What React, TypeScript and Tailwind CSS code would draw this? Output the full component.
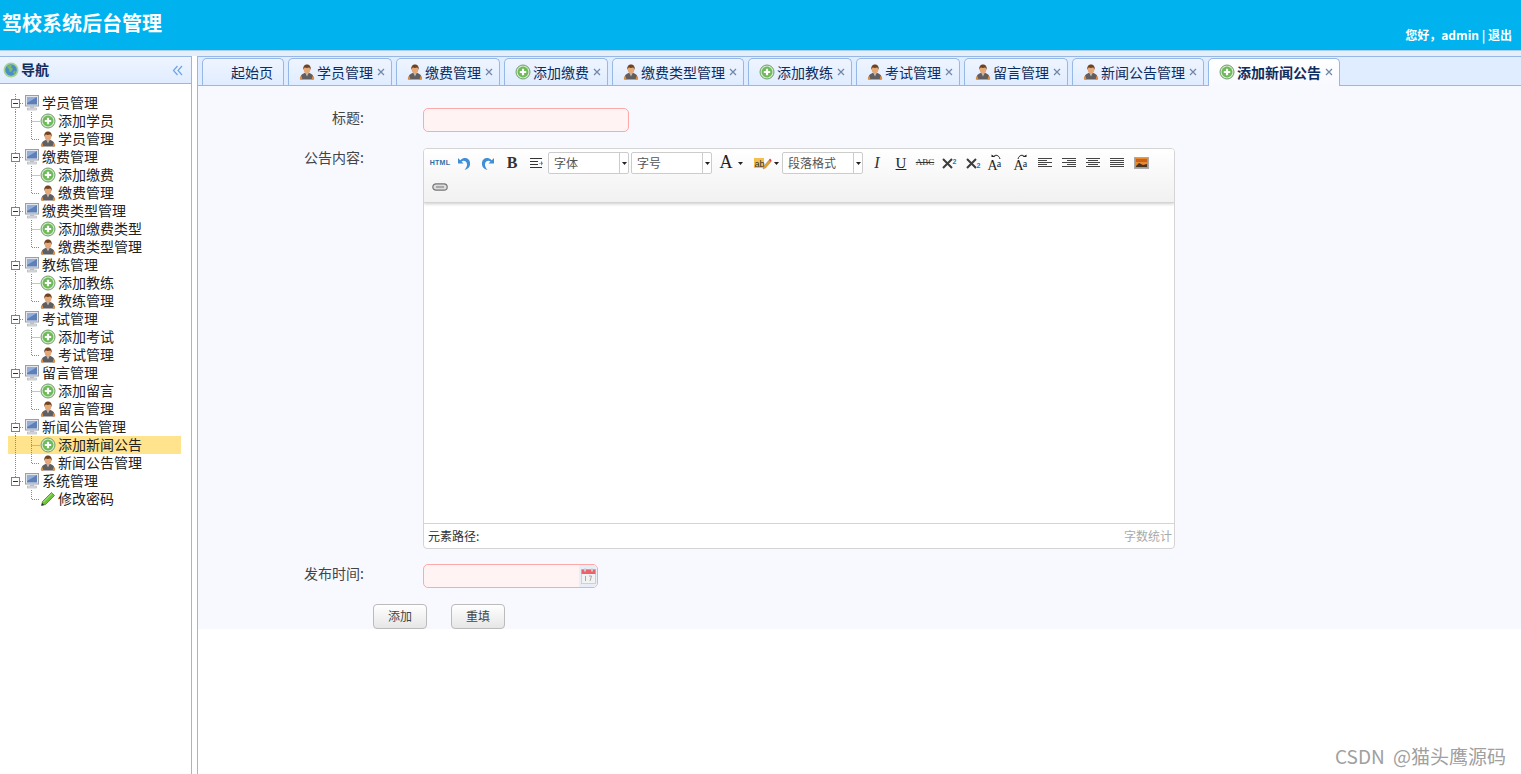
import type { ReactNode } from "react"

function PlusIcon() {
  return (
    <svg width="16" height="16" viewBox="0 0 16 16" className="shrink-0">
      <circle cx="8" cy="8" r="7" fill="#d5e8cf" stroke="#6f9f68" strokeWidth="1" />
      <circle cx="8" cy="8" r="5.400" fill="#6dbb58" />
      <path d="M8 4.800v6.400M4.800 8h6.400" stroke="#fff" strokeWidth="2.200" />
    </svg>
  )
}

function PersonIcon() {
  return (
    <svg width="16" height="16" viewBox="0 0 16 16" className="shrink-0">
      <path d="M1.500 15.500c-.5-3.500 1-5.500 4-6.500h5c3 1 4.500 3 4 6.500z" fill="#5f5f62" />
      <path d="M1 15.500c-.5-1.500 0-3 1.500-3.500l1 3.500zM15 15.500c.5-1.500 0-3-1.500-3.500l-1 3.500z" fill="#e2893a" />
      <path d="M6.300 9L8 12.500 9.700 9z" fill="#b9b9b9" />
      <ellipse cx="8" cy="5.500" rx="3.300" ry="4" fill="#e5a878" />
      <path d="M4.300 6C3.700 2.300 5.800.5 8 .5s4.300 1.800 3.700 5.500c-.4-1.400-.9-2.200-1.700-2.500-1.300.5-3 .5-4 0-.8.300-1.300 1.100-1.700 2.500z" fill="#6f4220" />
    </svg>
  )
}

function ComputerIcon() {
  return (
    <svg width="16" height="16" viewBox="0 0 16 16" className="shrink-0">
      <rect x="1.500" y="0.500" width="13" height="10.500" fill="#e3e6ea" stroke="#9a9fa6" />
      <rect x="3" y="2" width="10" height="7.500" fill="#5f7fb8" />
      <path d="M3 2h10L3 8z" fill="#93aedb" />
      <rect x="6" y="11" width="4" height="2" fill="#c3c7cc" />
      <rect x="3.500" y="13" width="9" height="2" fill="#dfe2e5" stroke="#a8adb3" strokeWidth=".6" />
    </svg>
  )
}

function PencilIcon() {
  return (
    <svg width="16" height="16" viewBox="0 0 16 16" className="shrink-0">
      <path d="M1.500 14.500l1-4L11.500 1.500l3 3-9 9z" fill="#6cc23a" stroke="#3c8a20" strokeWidth=".8" />
      <path d="M3.500 11L12 2.500" stroke="#b6e88f" strokeWidth="1" />
      <path d="M1.500 14.500l.6-2.600 2 2z" fill="#2e2e2e" />
    </svg>
  )
}

function GlobeIcon() {
  return (
    <svg width="16" height="16" viewBox="0 0 16 16" className="shrink-0">
      <circle cx="8" cy="8" r="7.500" fill="#a3d48f" />
      <circle cx="8" cy="8" r="5.800" fill="#4a8ec9" />
      <path d="M4 5c1.500-2 4-2.500 5-2l-1 2.500 2 1-1.500 3-2 .5-.5-3zM10 10l2-1.500.8 1.500-2 2.500z" fill="#7dbb68" />
    </svg>
  )
}

function CalendarIcon() {
  return (
    <svg width="15" height="16" viewBox="0 0 15 16" className="shrink-0">
      <rect x="0.500" y="1.500" width="14" height="14" fill="#f2f2f2" stroke="#d0d0d0" />
      <rect x="0.500" y="1.500" width="14" height="4.500" fill="#e8636b" />
      <rect x="3" y="0.500" width="2" height="3" fill="#ccc" />
      <rect x="10" y="0.500" width="2" height="3" fill="#ccc" />
      <path d="M4.500 8v5M8 8h2.500l-1.500 5" stroke="#a8a8a8" strokeWidth="1" fill="none" />
    </svg>
  )
}

// dotted tree connectors, one 16x18 cell each
function Cell({ kind }: { kind: "line" | "join" | "end" | "none" }) {
  return (
    <svg width="16" height="18" viewBox="0 0 16 18" className="shrink-0">
      {kind !== "none" && kind !== "end" && (
        <path d="M7.500 0v18" stroke="#8a8a8a" strokeDasharray="1 1" />
      )}
      {kind === "end" && <path d="M7.500 0v9.500H16" stroke="#8a8a8a" strokeDasharray="1 1" fill="none" />}
      {kind === "join" && <path d="M7.500 9.500H16" stroke="#8a8a8a" strokeDasharray="1 1" />}
    </svg>
  )
}

function Expander({ last, first }: { last?: boolean; first?: boolean }) {
  return (
    <svg width="16" height="18" viewBox="0 0 16 18" className="shrink-0">
      <path d={first ? "M7.500 5V0" : "M7.500 0v5"} stroke="#8a8a8a" strokeDasharray="1 1" />
      {!last && <path d="M7.500 13v5" stroke="#8a8a8a" strokeDasharray="1 1" />}
      <path d="M12 9.500h4" stroke="#8a8a8a" strokeDasharray="1 1" />
      <rect x="3.500" y="5.500" width="8" height="8" fill="#fff" stroke="#808080" />
      <path d="M5 9.500h5" stroke="#333" />
    </svg>
  )
}

const groups = [
  { name: "学员管理", add: "添加学员", manage: "学员管理" },
  { name: "缴费管理", add: "添加缴费", manage: "缴费管理" },
  { name: "缴费类型管理", add: "添加缴费类型", manage: "缴费类型管理" },
  { name: "教练管理", add: "添加教练", manage: "教练管理" },
  { name: "考试管理", add: "添加考试", manage: "考试管理" },
  { name: "留言管理", add: "添加留言", manage: "留言管理" },
  { name: "新闻公告管理", add: "添加新闻公告", manage: "新闻公告管理" },
]

function Row({ children, selected }: { children: ReactNode; selected?: boolean }) {
  return (
    <div className={`flex h-[18px] items-center text-[14px] leading-[16px] text-[#222] ${selected ? "bg-[#ffe48d]" : ""}`}>
      {children}
    </div>
  )
}

function Tree() {
  return (
    <div className="ml-2 mr-[10px] mt-[10px]">
      {groups.map((g, i) => (
        <div key={g.name}>
          <Row>
            <Expander first={i === 0} />
            <ComputerIcon />
            <span className="mb-[2px] ml-[2px]">{g.name}</span>
          </Row>
          <Row selected={g.add === "添加新闻公告"}>
            <Cell kind="line" />
            <Cell kind="join" />
            <PlusIcon />
            <span className="mb-[2px] ml-[2px]">{g.add}</span>
          </Row>
          <Row>
            <Cell kind="line" />
            <Cell kind="end" />
            <PersonIcon />
            <span className="mb-[2px] ml-[2px]">{g.manage}</span>
          </Row>
        </div>
      ))}
      <Row>
        <Expander last />
        <ComputerIcon />
        <span className="mb-[2px] ml-[2px]">系统管理</span>
      </Row>
      <Row>
        <Cell kind="none" />
        <Cell kind="end" />
        <PencilIcon />
        <span className="mb-[2px] ml-[2px]">修改密码</span>
      </Row>
    </div>
  )
}

const tabs: { label: string; icon: "person" | "plus" }[] = [
  { label: "学员管理", icon: "person" },
  { label: "缴费管理", icon: "person" },
  { label: "添加缴费", icon: "plus" },
  { label: "缴费类型管理", icon: "person" },
  { label: "添加教练", icon: "plus" },
  { label: "考试管理", icon: "person" },
  { label: "留言管理", icon: "person" },
  { label: "新闻公告管理", icon: "person" },
]

function Tab({ label, icon, active }: { label: string; icon: "person" | "plus"; active?: boolean }) {
  return (
    <div
      className={`flex items-center rounded-t-[5px] border border-b-0 border-[#95b8e7] pl-[10px] pr-[2px] text-[14px] leading-[26px] text-[#0e2d5f] ${
        active
          ? "relative z-10 h-[28px] bg-gradient-to-b from-white to-[#f8f9ff] pb-[2px] font-bold"
          : "h-[27px] bg-gradient-to-b from-[#eff5ff] to-[#e0ecff] pb-[1px]"
      }`}
    >
      {icon === "person" ? <PersonIcon /> : <PlusIcon />}
      <span className="ml-[2px] w-max">{label}</span>
      <span className="flex h-[16px] w-[16px] items-center justify-center">
        <svg width="8" height="8" viewBox="0 0 8 8">
          <path d="M1 1l6 6M7 1L1 7" stroke="#6f86a8" strokeWidth="1.200" />
        </svg>
      </span>
    </div>
  )
}

function Cellbtn({ children, className = "w-[24px]" }: { children: ReactNode; className?: string }) {
  return <div className={`flex h-[24px] shrink-0 items-center justify-center ${className}`}>{children}</div>
}

function Combo({ label, width }: { label: string; width: string }) {
  return (
    <div className={`flex h-[22px] shrink-0 rounded-[2px] border border-[#ccc] bg-white ${width}`}>
      <span className="flex-1 pl-[5px] text-[12px] leading-[20px] text-[#555]">{label}</span>
      <span className="flex w-[9px] items-center justify-center border-l border-[#ccc]">
        <Caret />
      </span>
    </div>
  )
}

function Caret() {
  return (
    <svg width="5" height="3" viewBox="0 0 5 3" className="shrink-0">
      <path d="M0 0h5L2.500 3z" fill="#222" />
    </svg>
  )
}

function Lines({ rows }: { rows: [number, number][] }) {
  return (
    <svg width="16" height="12" viewBox="0 0 16 12">
      {rows.map(([x, w], i) => (
        <path key={i} d={`M${x} ${i * 2 + 1.500}h${w}`} stroke="#444" strokeWidth="1" />
      ))}
    </svg>
  )
}

function Letter({ children, className }: { children: ReactNode; className: string }) {
  return <span className={`font-['Liberation_Serif',serif] ${className}`}>{children}</span>
}

function FontSizeIcon({ up }: { up?: boolean }) {
  return (
    <span className="relative flex h-[16px] w-[15px] items-end font-['Liberation_Serif',serif] leading-[11px] text-[#222]">
      <span className="text-[14px]">A</span>
      <span className="-ml-[1px] -translate-y-[2px] text-[10px]">a</span>
      <svg width="10" height="6" viewBox="0 0 10 6" className="absolute left-[3px] -top-[1px]">
        <path d={up ? "M1 5C2 1 6 0 7.500 3" : "M9 5C8 1 4 0 2.500 3"} stroke="#222" fill="none" />
        <path d={up ? "M5.500 3h4V.5z" : "M4.500 3h-4V.5z"} fill="#222" />
      </svg>
    </span>
  )
}

function CrossIcon({ sup }: { sup?: boolean }) {
  return (
    <span className={`flex ${sup ? "items-start" : "items-end"}`}>
      <svg width="11" height="11" viewBox="0 0 11 11" className="shrink-0">
        <path d="M1 1l9 9M10 1l-9 9" stroke="#3c3c3c" strokeWidth="2" />
      </svg>
      <span className="font-['Liberation_Sans',sans-serif] text-[7px] font-bold leading-[7px] text-[#2f6fd0]">2</span>
    </span>
  )
}

function Toolbar() {
  return (
    <div className="h-[54px] shrink-0 border-b border-[#d4d4d4] bg-gradient-to-b from-white to-[#f1f1f1] pl-[4px] pt-[2px] shadow-[0_1px_3px_#ccc]">
      <div className="flex h-[24px] items-center">
        <Cellbtn>
          <span className="font-['Liberation_Sans',sans-serif] text-[7px] font-bold tracking-[0.3px] text-[#2a6fa8]">HTML</span>
        </Cellbtn>
        <Cellbtn>
          <svg width="14" height="15" viewBox="0 0 14 15">
            <path d="M1 2v5.500h5.500L4.500 5.500C6.500 4 9.500 5 10 8c.3 2.200-.8 4-2.500 6 3.700-.8 6-3.500 5.500-7.500C12.300 2 7.500.500 3.200 4.200z" fill="#3f8fd6" />
          </svg>
        </Cellbtn>
        <Cellbtn>
          <svg width="14" height="15" viewBox="0 0 14 15">
            <path d="M13 2v5.500H7.500L9.500 5.500C7.500 4 4.500 5 4 8c-.3 2.200.8 4 2.500 6C2.800 13.200.5 10.500 1 6.500 1.700 2 6.500.500 10.800 4.200z" fill="#3f8fd6" />
          </svg>
        </Cellbtn>
        <Cellbtn>
          <Letter className="text-[16px] font-bold text-[#333]">B</Letter>
        </Cellbtn>
        <Cellbtn>
          <svg width="14" height="12" viewBox="0 0 14 12">
            <path d="M1 1.500h12M1 4.500h8M1 7.500h8M1 10.500h12" stroke="#333" />
            <path d="M10 6h2V4l2 2.200-2 2.200V6.500h-2z" fill="#3f7fd6" />
          </svg>
        </Cellbtn>
        <Combo label="字体" width="w-[81px]" />
        <div className="w-[2px] shrink-0" />
        <Combo label="字号" width="w-[81px]" />
        <Cellbtn className="w-[38px] gap-[5px]">
          <Letter className="-translate-y-[1px] text-[18px] text-[#222]">A</Letter>
          <Caret />
        </Cellbtn>
        <Cellbtn className="w-[32px] gap-[2px] pl-[1px]">
          <svg width="18" height="15" viewBox="0 0 18 15">
            <rect x="0" y="2" width="10" height="10" fill="#f5bf4f" />
            <text x="0.500" y="10.500" fontSize="9" fill="#333" fontFamily="Liberation Sans">ab</text>
            <path d="M9 13l1-3 5.500-6.500 1.800 1.800-5.500 6.500z" fill="#e8a02e" stroke="#a06a20" strokeWidth=".4" />
            <path d="M15 4l1-1.500 1.700 1.700-1 1.500z" fill="#d44" />
          </svg>
          <Caret />
        </Cellbtn>
        <Combo label="段落格式" width="w-[81px]" />
        <div className="w-[2px] shrink-0" />
        <Cellbtn>
          <Letter className="text-[16px] italic text-[#333]">I</Letter>
        </Cellbtn>
        <Cellbtn>
          <Letter className="text-[15px] text-[#222] underline">U</Letter>
        </Cellbtn>
        <Cellbtn>
          <Letter className="text-[9px] text-[#333] line-through">ABC</Letter>
        </Cellbtn>
        <Cellbtn>
          <CrossIcon sup />
        </Cellbtn>
        <Cellbtn>
          <CrossIcon />
        </Cellbtn>
        <Cellbtn className="w-[20px]">
          <FontSizeIcon />
        </Cellbtn>
        <div className="w-[4px] shrink-0" />
        <Cellbtn>
          <FontSizeIcon up />
        </Cellbtn>
        <Cellbtn>
          <Lines rows={[[1, 14], [1, 9], [1, 14], [1, 9], [1, 14]]} />
        </Cellbtn>
        <Cellbtn>
          <Lines rows={[[1, 14], [6, 9], [1, 14], [6, 9], [1, 14]]} />
        </Cellbtn>
        <Cellbtn>
          <Lines rows={[[1, 14], [3, 10], [1, 14], [3, 10], [1, 14]]} />
        </Cellbtn>
        <Cellbtn>
          <Lines rows={[[1, 14], [1, 14], [1, 14], [1, 14], [1, 14]]} />
        </Cellbtn>
        <Cellbtn>
          <svg width="15" height="12" viewBox="0 0 15 12">
            <rect x="0.500" y="0.500" width="14" height="11" fill="#e8892c" stroke="#aaa" />
            <rect x="2" y="2" width="11" height="3" fill="#c9601c" />
            <path d="M2 9l3-3 4 2 4-1v3H2z" fill="#4a3320" />
          </svg>
        </Cellbtn>
      </div>
      <div className="flex h-[24px] items-center">
        <Cellbtn>
          <svg width="16" height="8" viewBox="0 0 16 8">
            <rect x="0.800" y="0.800" width="14.400" height="6.400" rx="3.200" fill="#ddd" stroke="#777" strokeWidth="1.200" />
            <path d="M4 4h8" stroke="#777" strokeWidth="1.200" />
          </svg>
        </Cellbtn>
      </div>
    </div>
  )
}

function Label({ children, className = "leading-[18px]" }: { children: ReactNode; className?: string }) {
  return <div className={`w-[166px] shrink-0 text-right text-[14px] text-[#444] ${className}`}>{children}</div>
}

function Btn({ children }: { children: ReactNode }) {
  return (
    <button className="h-[25px] w-[54px] rounded-[4px] border border-[#bbb] bg-gradient-to-b from-white to-[#e6e6e6] pb-[1px] text-[12px] leading-[22px] text-[#444]">
      {children}
    </button>
  )
}

export default function App() {
  return (
    <div className="flex h-screen flex-col overflow-hidden bg-white font-['Noto_Sans_CJK_SC',sans-serif]">
      <header className="flex h-[51px] shrink-0 items-start justify-between border-b border-[#a9cde8] bg-[#00b3ee] text-white">
        <div className="ml-[2px] mt-[9px] text-[20px] font-bold leading-[28px]">驾校系统后台管理</div>
        <div className="mr-[9px] mt-[27px] text-[12px] font-bold leading-[16px]">您好，admin | 退出</div>
      </header>
      <div className="flex min-h-0 flex-1 bg-[#e6eef8] pt-[5px]">
        <aside className="flex w-[192px] shrink-0 flex-col border-r border-t border-[#95b8e7] bg-white">
          <div className="flex h-[27px] shrink-0 items-center border-b border-[#95b8e7] bg-gradient-to-b from-[#eff5ff] to-[#e0ecff] pl-[3px] pr-[8px]">
            <GlobeIcon />
            <span className="mb-[2px] ml-[2px] flex-1 text-[14px] font-bold leading-[20px] text-[#0e2d5f]">导航</span>
            <svg width="11" height="11" viewBox="0 0 11 11">
              <path d="M5.500 1L1.500 5.500 5.500 10M10 1L6 5.500 10 10" stroke="#6aa5e8" strokeWidth="1.200" fill="none" />
            </svg>
          </div>
          <Tree />
        </aside>
        <div className="w-[5px] shrink-0 bg-white" />
        <main className="flex min-w-0 flex-1 flex-col border-l border-t border-[#95b8e7] bg-white">
          <div className="flex h-[29px] shrink-0 items-end gap-[4px] border-b border-[#95b8e7] bg-[#e0ecff] pl-[4px]">
            <div className="flex h-[27px] w-[82px] items-center justify-end rounded-t-[5px] border border-b-0 border-[#95b8e7] bg-gradient-to-b from-[#eff5ff] to-[#e0ecff] pb-[1px] pr-[10px] text-[14px] leading-[26px] text-[#0e2d5f]">
              起始页
            </div>
            {tabs.map(t => (
              <Tab key={t.label + t.icon} label={t.label} icon={t.icon} />
            ))}
            <div className="-mb-px">
              <Tab label="添加新闻公告" icon="plus" active />
            </div>
          </div>
          <div className="flex h-[543px] shrink-0 flex-col bg-[#f8f9ff] pt-[22px]">
            <div className="flex items-start">
              <Label>标题:</Label>
              <div className="ml-[59px] h-[24px] w-[206px] rounded-[5px] border border-[#ffa8a8] bg-[#fff3f3]" />
            </div>
            <div className="mt-[16px] flex items-start">
              <Label>公告内容:</Label>
              <div className="ml-[59px] flex h-[401px] w-[752px] flex-col overflow-hidden rounded-[4px] border border-[#d4d4d4] bg-white">
                <Toolbar />
                <div className="flex-1" />
                <div className="flex h-[25px] shrink-0 items-center justify-between border-t border-[#d4d4d4] pl-[4px] pr-[2px] text-[12px] leading-[22px]">
                  <span className="text-[#333]">元素路径:</span>
                  <span className="text-[#aaa]">字数统计</span>
                </div>
              </div>
            </div>
            <div className="mt-[15px] flex items-start">
              <Label>发布时间:</Label>
              <div className="ml-[59px] flex h-[24px] w-[175px] justify-end overflow-hidden rounded-[5px] border border-[#ffa8a8] bg-[#fff3f3]">
                <div className="flex w-[18px] items-center justify-center bg-[#e8eef8]">
                  <CalendarIcon />
                </div>
              </div>
            </div>
            <div className="ml-[175px] mt-[16px] flex gap-[24px]">
              <Btn>添加</Btn>
              <Btn>重填</Btn>
            </div>
          </div>
          <div className="relative flex-1">
            <span className="absolute bottom-[6px] right-[15px] text-[19px] leading-[24px] text-[#a0a0a0] [word-spacing:4px]">CSDN @猫头鹰源码</span>
          </div>
        </main>
      </div>
    </div>
  )
}
